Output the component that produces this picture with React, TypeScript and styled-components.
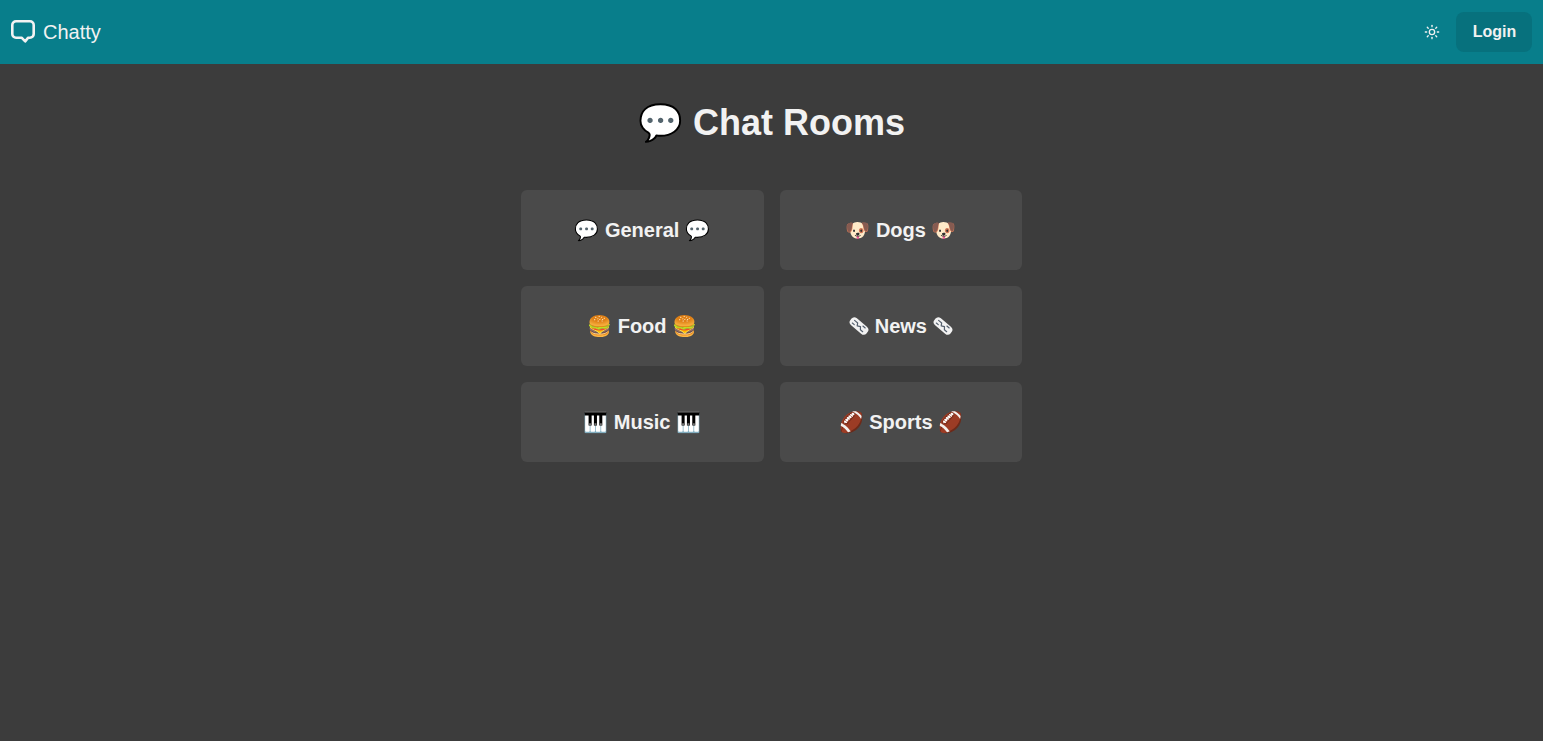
import React from "react";
import styled, { createGlobalStyle } from "styled-components";
import { Sun } from "lucide-react";

const Global = createGlobalStyle`
  html, body { margin: 0; padding: 0; }
  body {
    background: #3c3c3c;
    font-family: "Liberation Sans", Arial, sans-serif;
    color: #f2f2f2;
  }
  #root { min-height: 741px; }
`;

const Page = styled.div`
  min-height: 741px;
  background: #3c3c3c;
`;

const Navbar = styled.header`
  height: 64px;
  box-sizing: border-box;
  background: #087e8b;
  padding: 0 11px;
  display: flex;
  align-items: center;
  justify-content: space-between;
`;

const Brand = styled.a`
  display: flex;
  align-items: center;
  gap: 8px;
  color: #f2f2f2;
  font-size: 20px;
  line-height: 28px;
`;

const Actions = styled.div`
  display: flex;
  align-items: center;
  gap: 16px;
`;

const ThemeToggle = styled.button`
  display: flex;
  padding: 0;
  border: 0;
  background: transparent;
  color: #f2f2f2;
`;

const LoginButton = styled.button`
  width: 76px;
  height: 40px;
  padding: 0 0 0 1px;
  border: 0;
  border-radius: 8px;
  background: #07717d;
  color: #f2f2f2;
  font: 700 16px "Liberation Sans", Arial, sans-serif;
`;

const Main = styled.main`
  display: flex;
  flex-direction: column;
  align-items: center;
  padding-top: 39px;
`;

const Title = styled.h1`
  margin: 0 0 47px;
  font-size: 36px;
  line-height: 40px;
  font-weight: 700;
  color: #f2f2f2;
`;

const RoomGrid = styled.div`
  width: 501.5px;
  display: grid;
  grid-template-columns: 1fr 1fr;
  gap: 16px;
`;

const Room = styled.div`
  height: 80px;
  display: flex;
  align-items: center;
  justify-content: center;
  border-radius: 6px;
  background: #4a4a4a;
  font-size: 20px;
  line-height: 28px;
  font-weight: 700;
  color: #f2f2f2;
  white-space: pre;
`;

const RoomLabel = styled.span``;

const NewsSvg = styled.svg`
  width: 20px;
  height: 20px;
  vertical-align: -3px;
`;

const NewsIcon = () => (
  <NewsSvg viewBox="0 0 20 20">
    <g transform="rotate(40 10 10)">
      <rect x="-0.5" y="5.5" width="21" height="9" rx="4" fill="#f2f2f2" />
      <path
        d="M3 8.5h4l1.5 2.5 3-1.5 2 2.5h3M3 12h2.5M13 7.5h3"
        fill="none"
        stroke="#55606e"
        strokeWidth="1.2"
        strokeLinecap="round"
        strokeLinejoin="round"
      />
    </g>
  </NewsSvg>
);

const rooms = [
  { name: "General", glyph: "💬" },
  { name: "Dogs", glyph: "🐶" },
  { name: "Food", glyph: "🍔" },
  { name: "News", glyph: <NewsIcon /> },
  { name: "Music", glyph: "🎹" },
  { name: "Sports", glyph: "🏈" },
];

const Logo = () => (
  <svg width="24" height="24" viewBox="0 0 24 24" fill="none" stroke="currentColor" strokeWidth="2.6" strokeLinejoin="round" strokeLinecap="round">
    <path d="M5 1.3h14a3.7 3.7 0 0 1 3.7 3.7v9a3.7 3.7 0 0 1-3.7 3.7h-1.8l-3 3.6-3.6-3.6H5A3.7 3.7 0 0 1 1.3 14V5A3.7 3.7 0 0 1 5 1.3z" />
  </svg>
);

export default function App() {
  return (
    <Page>
      <Global />
      <Navbar>
        <Brand>
          <Logo />
          Chatty
        </Brand>
        <Actions>
          <ThemeToggle aria-label="Toggle theme">
            <Sun size={16} strokeWidth={2} />
          </ThemeToggle>
          <LoginButton>Login</LoginButton>
        </Actions>
      </Navbar>
      <Main>
        <Title>💬 Chat Rooms</Title>
        <RoomGrid>
          {rooms.map((r) => (
            <Room key={r.name}>
              <RoomLabel>
                {r.glyph} {r.name} {r.glyph}
              </RoomLabel>
            </Room>
          ))}
        </RoomGrid>
      </Main>
    </Page>
  );
}
